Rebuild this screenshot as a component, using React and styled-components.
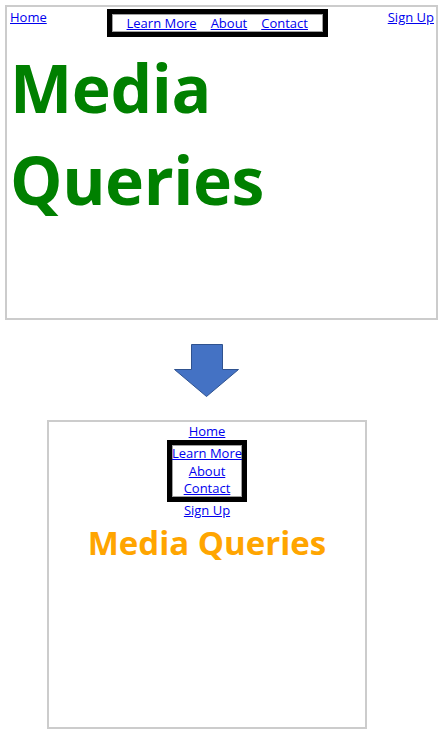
import React from "react";
import styled, { createGlobalStyle } from "styled-components";

const Global = createGlobalStyle`
  html, body { margin: 0; padding: 0; background: #fff; }
  body { font-family: "Open Sans", "Noto Sans", "Noto Sans CJK KR", sans-serif; }
`;

const Page = styled.div`
  width: 441px;
  height: 736px;
  display: flex;
  flex-direction: column;
  padding: 5px 0 0 5px;
  box-sizing: border-box;
`;

const Panel = styled.div`
  box-sizing: border-box;
  border: 2px solid #cccccc;
  background: #fff;
  width: ${(p) => p.$w}px;
  height: ${(p) => p.$h}px;
  padding: ${(p) => p.$pad};
`;

const Header = styled.div`
  display: flex;
  justify-content: space-between;
  align-items: flex-start;
`;

const Link = styled.a`
  color: #0000ee;
  text-decoration: underline;
  font-size: 13px;
  line-height: 17.3px;
  white-space: nowrap;
`;

const Nav = styled.nav`
  border: 5px solid #000;
  box-shadow: inset 0 0 0 1px #a0a0a0;
  display: flex;
  flex-direction: ${(p) => (p.$vertical ? "column" : "row")};
  align-items: center;
  gap: ${(p) => (p.$vertical ? "0" : "14px")};
  padding: ${(p) => (p.$vertical ? "0" : "1px 15px 0")};
`;

const BigTitle = styled.h1`
  margin: 4px 0 0;
  color: #008000;
  font-weight: 700;
  font-size: 66px;
  line-height: 92px;
  letter-spacing: -0.4px;
`;

const Lower = styled.div`
  width: 404px;
  display: flex;
  flex-direction: column;
  align-items: center;
`;

const Arrow = styled.svg`
  display: block;
  margin: 24px 0 23px;
`;

const Stack = styled.div`
  display: flex;
  flex-direction: column;
  align-items: center;
  padding-top: 1px;
`;

const SmallTitle = styled.h1`
  margin: 4px 0 0;
  color: #ffa500;
  font-weight: 700;
  font-size: 33px;
  line-height: 40px;
`;

export default function App() {
  return (
    <>
      <Global />
      <Page>
        <Panel $w={433} $h={315} $pad="2px 2px 0 3px">
          <Header>
            <Link href="#">Home</Link>
            <Nav>
              <Link href="#">Learn More</Link>
              <Link href="#">About</Link>
              <Link href="#">Contact</Link>
            </Nav>
            <Link href="#">Sign Up</Link>
          </Header>
          <BigTitle>
            Media
            <br />
            Queries
          </BigTitle>
        </Panel>
        <Lower>
          <Arrow width="66" height="53" viewBox="0 0 66 53">
            <path
              d="M17.5 0.5 H48.5 V25.5 H64.5 L32.5 52.5 L0.5 25.5 H17.5 Z"
              fill="#4472c4"
              stroke="#2f528f"
              strokeWidth="1"
            />
          </Arrow>
          <Panel $w={320} $h={309} $pad="0">
            <Stack>
              <Link href="#">Home</Link>
              <Nav $vertical>
                <Link href="#">Learn More</Link>
                <Link href="#">About</Link>
                <Link href="#">Contact</Link>
              </Nav>
              <Link href="#">Sign Up</Link>
              <SmallTitle>Media Queries</SmallTitle>
            </Stack>
          </Panel>
        </Lower>
      </Page>
    </>
  );
}
